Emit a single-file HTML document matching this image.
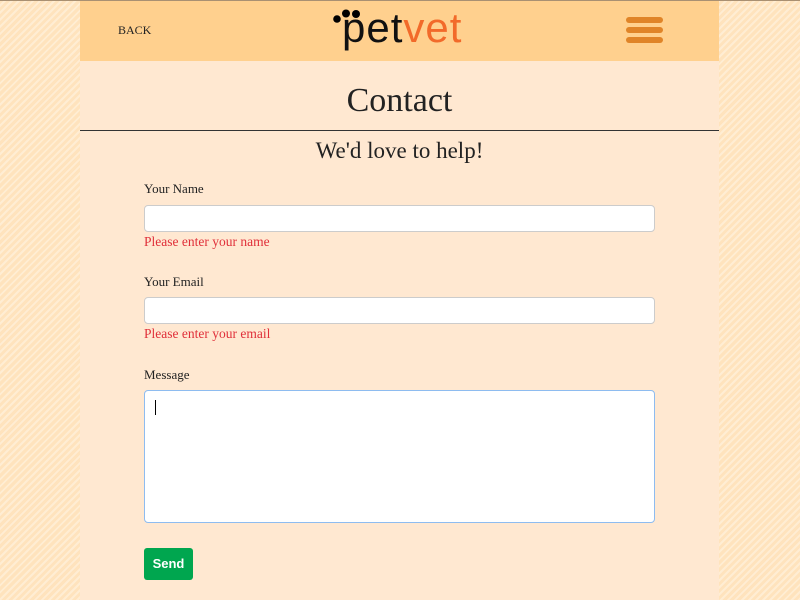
<!DOCTYPE html>
<html><head><meta charset="utf-8"><style>
html,body{margin:0;padding:0;width:800px;height:600px;overflow:hidden}
body{background:repeating-linear-gradient(135deg,#ffe3bd 0 3px,#ffedd3 3px 5px);border-top:1px solid #a99072;box-sizing:border-box;font-family:"Liberation Sans",sans-serif}
.wrap{position:absolute;left:80px;top:1px;width:639px;height:599px;background:#ffe8d1}
.hdr{height:60px;background:#ffd08e;position:relative}
.back{position:absolute;left:38px;top:22px;font-family:"Liberation Serif",serif;font-size:12px;color:#222}
.logo{position:absolute;left:262px;top:4px;font-size:42px;letter-spacing:1px;line-height:46px}
.ham{position:absolute;left:546px;top:16px;width:37px}
.ham div{height:6px;background:#e08428;border-radius:3px;margin-bottom:4px}
h1{margin:0;text-align:center;font-family:"Liberation Serif",serif;font-weight:normal;font-size:34px;color:#222;padding-top:21px;height:48px}
.rule{border-top:1px solid #333;}
h2{margin:0;text-align:center;font-family:"Liberation Serif",serif;font-weight:normal;font-size:23px;color:#222;padding-top:7px}
.lbl{position:absolute;left:64px;font-family:"Liberation Serif",serif;font-size:13px;color:#222}
.in{position:absolute;left:64px;width:509px;height:25px;background:#fff;border:1px solid #ccc;border-radius:4px}
.err{position:absolute;left:64px;font-size:13.5px;color:#e0303a;font-family:"Liberation Serif",serif}
.btn{position:absolute;left:64px;top:547px;width:49px;height:32px;background:#00a64f;border-radius:3px;color:#fff;font-size:13px;font-weight:bold;text-align:center;line-height:32px}
</style></head><body>
<div class="wrap">
<div class="hdr">
<svg width="30" height="20" style="position:absolute;left:252px;top:7px"><circle cx="5" cy="11" r="3.8" fill="#000"/><circle cx="14" cy="5.5" r="4" fill="#000"/><circle cx="24" cy="6" r="4" fill="#000"/></svg>
<div class="back">BACK</div>
<div class="logo"><span style="color:#111">pet</span><span style="color:#f26a2a">vet</span></div>
<div class="ham"><div></div><div></div><div></div></div>
</div>
<h1>Contact</h1>
<div class="rule"></div>
<h2>We'd love to help!</h2>
<div class="lbl" style="top:180px">Your Name</div>
<div class="in" style="top:204px"></div>
<div class="err" style="top:233px">Please enter your name</div>
<div class="lbl" style="top:273px">Your Email</div>
<div class="in" style="top:296px"></div>
<div class="err" style="top:325px">Please enter your email</div>
<div class="lbl" style="top:366px">Message</div>
<div class="in" style="top:389px;height:131px;border-color:#8ebcf0"><div style="position:absolute;left:10px;top:9px;width:1px;height:15px;background:#000"></div></div>
<div class="btn">Send</div>
</div>
</body></html>
